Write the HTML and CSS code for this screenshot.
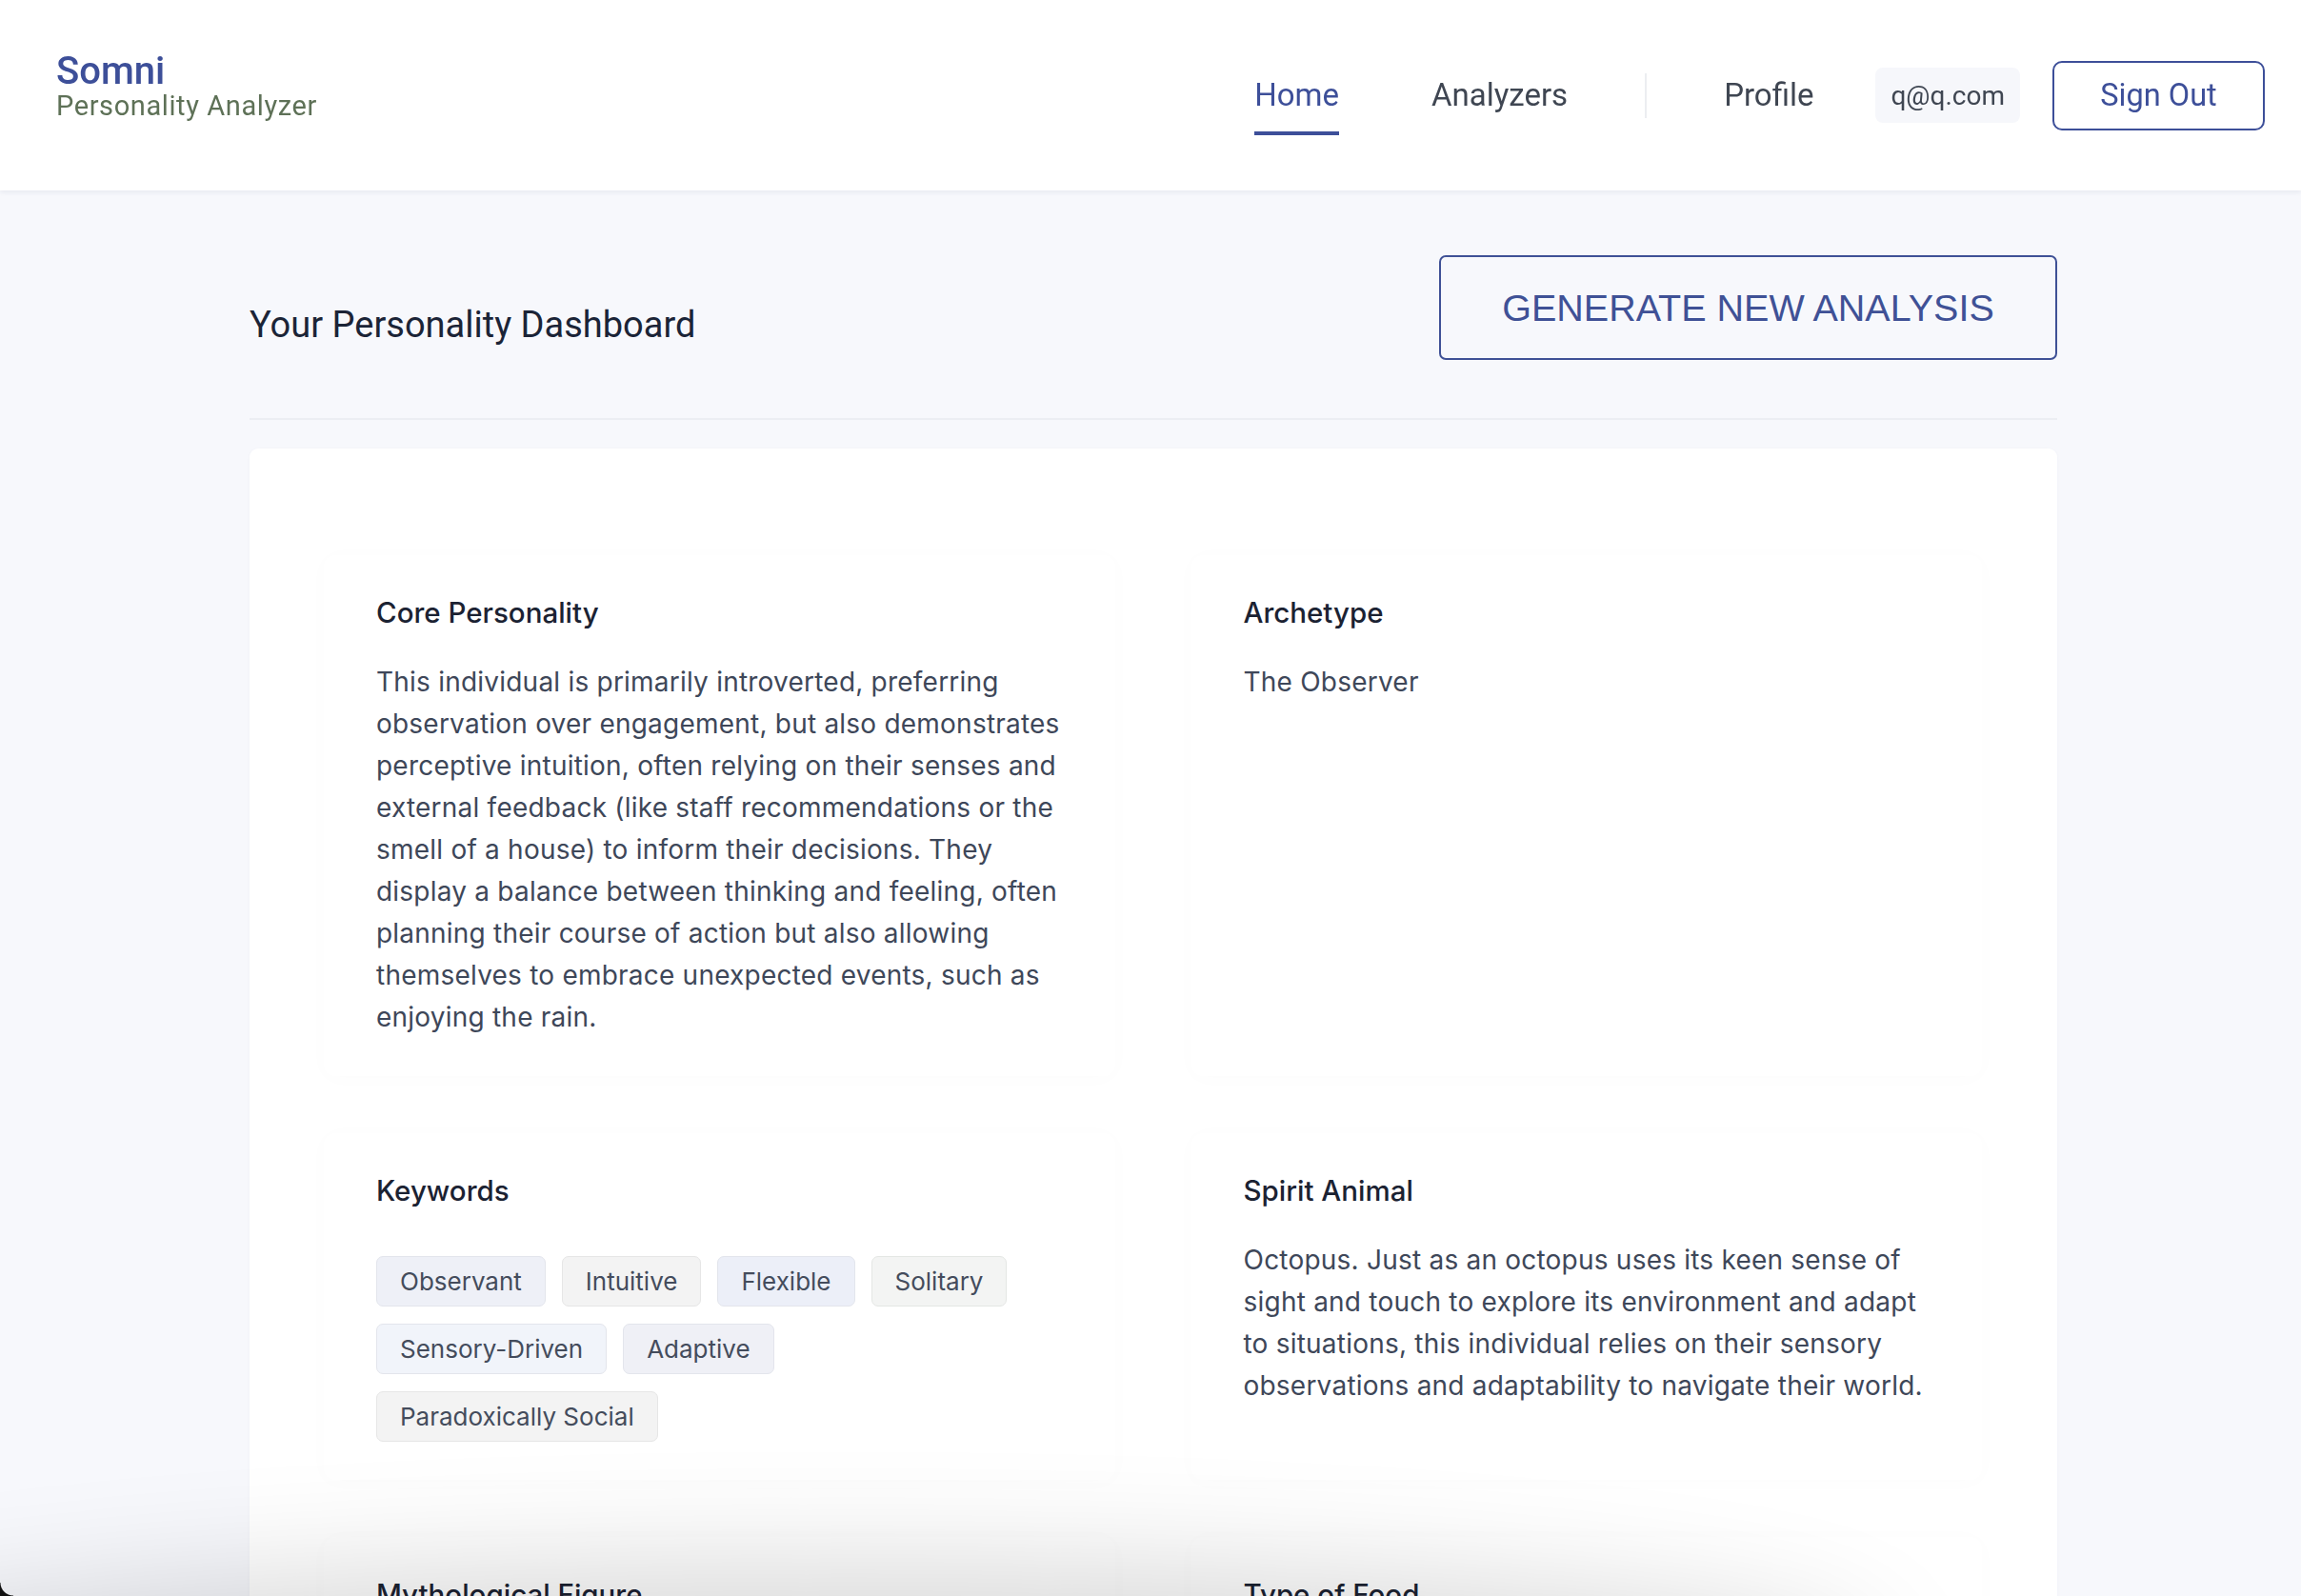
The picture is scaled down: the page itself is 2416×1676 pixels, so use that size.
FILE: index.html
```html
<!DOCTYPE html>
<html lang="en">
<head>
<meta charset="utf-8">
<title>Somni – Personality Dashboard</title>
<link rel="stylesheet" href="styles.css">
</head>
<body>
<header class="topbar">
  <div class="brand">
    <div class="brand-name">Somni</div>
    <div class="brand-sub">Personality Analyzer</div>
  </div>
  <nav class="nav">
    <a class="nav-link active">Home</a>
    <a class="nav-link analyzers">Analyzers</a>
    <span class="nav-divider"></span>
    <a class="nav-link">Profile</a>
    <span class="email">q@q.com</span>
    <button class="signout">Sign Out</button>
  </nav>
</header>
<main class="page">
  <div class="page-head">
    <h1 class="title">Your Personality Dashboard</h1>
    <button class="generate">GENERATE NEW ANALYSIS</button>
  </div>
  <hr class="sep">
  <section class="card">
    <div class="grid">
      <article class="item">
        <h2>Core Personality</h2>
        <p>This individual is primarily introverted, preferring observation over engagement, but also demonstrates perceptive intuition, often relying on their senses and external feedback (like staff recommendations or the smell of a house) to inform their decisions. They display a balance between thinking and feeling, often planning their course of action but also allowing themselves to embrace unexpected events, such as enjoying the rain.</p>
      </article>
      <article class="item">
        <h2>Archetype</h2>
        <p>The Observer</p>
      </article>
      <article class="item">
        <h2>Keywords</h2>
        <div class="tags">
          <span class="tag t1">Observant</span>
          <span class="tag t2">Intuitive</span>
          <span class="tag t3">Flexible</span>
          <span class="tag t4">Solitary</span>
          <span class="tag t5">Sensory-Driven</span>
          <span class="tag t6">Adaptive</span>
          <span class="tag t2">Paradoxically Social</span>
        </div>
      </article>
      <article class="item">
        <h2>Spirit Animal</h2>
        <p>Octopus. Just as an octopus uses its keen sense of sight and touch to explore its environment and adapt to situations, this individual relies on their sensory observations and adaptability to navigate their world.</p>
      </article>
      <article class="item">
        <h2>Mythological Figure</h2>
      </article>
      <article class="item">
        <h2>Type of Food</h2>
      </article>
    </div>
  </section>
</main>
<div class="screen-shadow"></div>
<div class="corner corner-tl"></div>
<div class="corner corner-bl"></div>
</body>
</html>
```

FILE: styles.css
```css
body {
  margin: 0;
  background: #f7f8fc;
  font-family: Inter, "Noto Sans", sans-serif;
  overflow: hidden;
}

.topbar {
  height: 200px;
  box-sizing: border-box;
  background: #ffffff;
  display: flex;
  align-items: center;
  justify-content: space-between;
  padding: 0 38px 0 59px;
  box-shadow: 0 2px 5px rgba(30, 40, 80, 0.07);
  position: relative;
  z-index: 1;
}

.brand {
  margin-bottom: 22px;
  font-family: Roboto, "Liberation Sans", sans-serif;
}

.brand-name {
  font-size: 40px;
  line-height: 44px;
  font-weight: 500;
  color: #3d4f99;
}

.brand-sub {
  font-size: 29px;
  line-height: 28px;
  letter-spacing: 0.6px;
  color: #5e7157;
}

.nav {
  display: flex;
  align-items: center;
  font-family: Roboto, "Liberation Sans", sans-serif;
}

.nav-link {
  font-size: 33px;
  line-height: 40px;
  color: #3f4652;
  padding: 22px 0 18px;
  border-bottom: 4px solid transparent;
  cursor: pointer;
}

.nav-link.active {
  color: #3d4f99;
  border-bottom-color: #3d4f99;
}

.nav-link.analyzers {
  margin-left: 97px;
}

.nav-divider {
  width: 2px;
  height: 47px;
  background: #eceef1;
  margin: 0 81px;
}

.email {
  margin-left: 65px;
  background: #f6f7fb;
  border-radius: 8px;
  padding: 0 16px;
  height: 58px;
  display: flex;
  align-items: center;
  font-size: 28px;
  color: #3f4652;
}

.signout {
  margin-left: 34px;
  width: 223px;
  height: 73px;
  border: 2px solid #3d4f99;
  border-radius: 10px;
  background: #ffffff;
  color: #3d4f99;
  font-family: Roboto, "Liberation Sans", sans-serif;
  font-size: 32.5px;
}

.page {
  padding: 68px 256px 0 262px;
}

.page-head {
  display: flex;
  align-items: center;
  justify-content: space-between;
}

.title {
  margin: 36px 0 0;
  font-family: Roboto, "Liberation Sans", sans-serif;
  font-weight: 400;
  font-size: 38px;
  line-height: 46px;
  color: #1b2437;
}

.generate {
  width: 649px;
  height: 110px;
  border: 2px solid #3f5196;
  border-radius: 7px;
  background: transparent;
  color: #3f5196;
  font-family: "Liberation Sans", Arial, sans-serif;
  font-size: 39.5px;
}

.sep {
  margin: 61px 0 0;
  height: 2px;
  border: 0;
  background: #eceef3;
}

.card {
  margin-top: 30px;
  background: #ffffff;
  border-radius: 9px;
  padding: 112px 79px 200px 78px;
  box-shadow: 0 1px 4px rgba(30, 40, 80, 0.03);
}

.grid {
  display: grid;
  grid-template-columns: 1fr 1fr;
  gap: 60px 80px;
}

.item {
  padding: 38px 48px 40px 55px;
  border-radius: 12px;
  background: #ffffff;
  box-shadow: 0 2px 24px rgba(0, 0, 0, 0.014);
}

.item h2 {
  margin: 0 0 28px;
  font-size: 29.5px;
  line-height: 45px;
  font-weight: 500;
  color: #1b2232;
}

.item p {
  margin: 0;
  max-width: 724px;
  font-size: 28px;
  line-height: 44px;
  letter-spacing: 0.22px;
  color: #3e4759;
}

.tags {
  display: flex;
  flex-wrap: wrap;
  gap: 18px 17px;
  margin-top: 46px;
}

.tag {
  font-size: 26px;
  line-height: 39px;
  padding: 6px 24px;
  border: 1px solid #e3e5ec;
  border-radius: 7px;
  color: #444c5c;
}

.t1 { background: #eef0f7; }
.t2 { background: #f3f3f3; border-color: #e6e6e6; }
.t3 { background: #eceff8; }
.t4 { background: #f3f4f3; border-color: #e4e7e4; }
.t5 { background: #f1f4fa; }
.t6 { background: #eff0f6; }

.screen-shadow {
  position: fixed;
  left: -200px;
  width: 2150px;
  bottom: -160px;
  height: 160px;
  border-radius: 50%;
  box-shadow: 0 0 130px 30px rgba(0, 0, 0, 0.16);
  pointer-events: none;
}

.corner {
  position: fixed;
  left: 0;
  width: 14px;
  height: 14px;
  pointer-events: none;
}

.corner-tl {
  top: 0;
  background: radial-gradient(circle at 14px 14px, transparent 13px, #111 14px);
}

.corner-bl {
  bottom: 0;
  background: radial-gradient(circle at 14px 0, transparent 13px, #111 14px);
}
```
